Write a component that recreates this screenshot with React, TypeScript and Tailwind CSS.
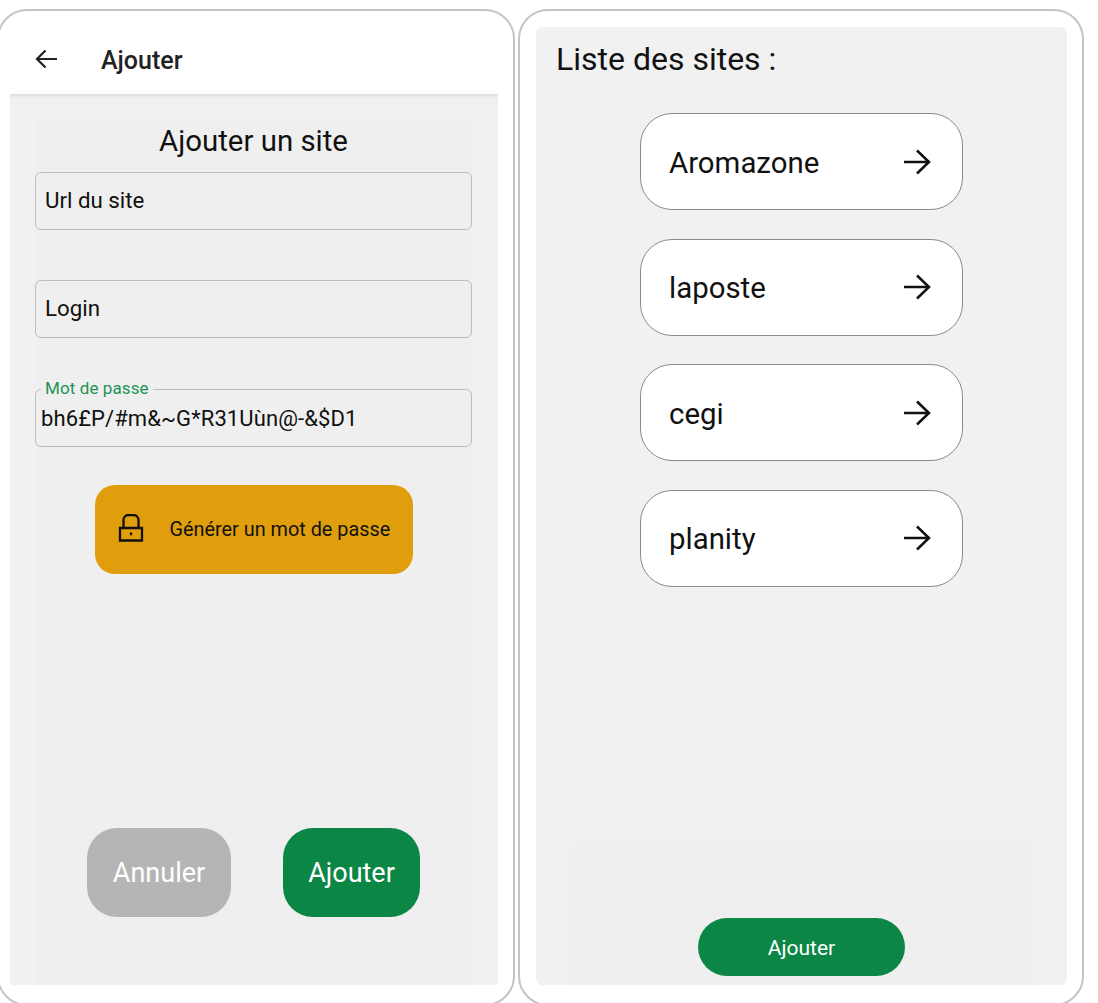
const font = { fontFamily: "Roboto, sans-serif" }

const sites = ["Aromazone", "laposte", "cegi", "planity"]

function OutlinedField({ label, className = "" }: { label: string; className?: string }) {
  return (
    <div className={`flex h-[58px] w-[437px] items-center rounded-[6px] border-[1.5px] border-[#bdbdbd] pl-[9px] text-[22.3px] text-[#111] ${className}`}>
      {label}
    </div>
  )
}

function PasswordField() {
  return (
    <div className="relative mt-[51px] flex h-[58px] w-[437px] items-center rounded-[6px] border-[1.5px] border-[#bdbdbd] pl-[5px] text-[22px] tracking-[0.1px] text-[#111]">
      <span className="absolute -top-[12px] left-[5px] bg-[#efefef] px-[4px] text-[17px] leading-[20px] text-[#1c9455]">Mot de passe</span>
      <span className="pt-[1px]">bh6£P/#m&amp;~G*R31Uùn@-&amp;$D1</span>
    </div>
  )
}

function AddScreen() {
  return (
    <section className="-ml-[3px] flex h-[997px] w-[518px] shrink-0 flex-col rounded-[30px] border-2 border-[#c4c4c4] bg-white pl-[11px] pr-[15px]">
      <header className="flex h-[83px] shrink-0 items-center pl-[23px] pt-[17px]">
        <svg className="mb-[4px]" width="26" height="26" viewBox="0 0 26 26" fill="none" stroke="#222" strokeWidth="2.2">
          <path d="M24 13H4M12.5 4.5 4 13l8.5 8.5" />
        </svg>
        <h1 className="ml-[42px] text-[25px] font-medium text-[#222]">Ajouter</h1>
      </header>
      <div className="h-[891px] w-[488px] rounded-b-[4px] bg-[#f1f1f1] px-[25px] pt-[26px] shadow-[inset_0_5px_5px_-4px_rgba(0,0,0,0.12)]">
        <div className="flex h-[865px] w-[437px] flex-col items-center bg-[#efefef]">
          <h2 className="h-[52px] pt-[3px] text-[29.4px] leading-[36px] text-[#111]">Ajouter un site</h2>
          <OutlinedField label="Url du site" />
          <OutlinedField label="Login" className="mt-[50px]" />
          <PasswordField />
          <button className="mt-[38px] flex h-[89px] w-[318px] items-center rounded-[20px] bg-[#e09e0c] pl-[23px] text-[19.85px] text-[#111]">
            <svg className="mb-[4px]" width="26" height="28" viewBox="0 0 26 28" fill="none" stroke="#111" strokeWidth="2.3">
              <path d="M2 14h22v12.5H2zM5.5 14V6a5 5 0 0 1 5-5h5a5 5 0 0 1 5 5v8" />
              <circle cx="13" cy="19.5" r="1.2" fill="#111" stroke="none" />
              <path d="M13 19.5v2" strokeWidth="1.3" />
            </svg>
            <span className="ml-[26px] pt-[1px]">Générer un mot de passe</span>
          </button>
          <div className="mt-[254px] flex w-[333px] justify-between">
            <button className="h-[89px] w-[144px] rounded-[30px] bg-[#b5b5b5] pt-[2px] text-[27px] text-white">Annuler</button>
            <button className="h-[89px] w-[137px] rounded-[30px] bg-[#0b8645] pt-[2px] text-[27px] text-white">Ajouter</button>
          </div>
        </div>
      </div>
    </section>
  )
}

function SiteCard({ name }: { name: string }) {
  return (
    <div className="flex h-[97px] w-[323px] items-center justify-between rounded-[32px] border border-[#8a8a8a] bg-white pl-[28px] pr-[29px] text-[29.4px] text-[#111]">
      <span className="pt-[3px]">{name}</span>
      <svg className="mr-[1px]" width="32" height="28" viewBox="0 0 32 28" fill="none" stroke="#111" strokeWidth="2.5">
        <path d="M4 14h25M17 2.5 29 14 17 25.5" />
      </svg>
    </div>
  )
}

function ListScreen() {
  return (
    <section className="ml-[3px] flex h-[997px] w-[566px] shrink-0 flex-col rounded-[30px] border-2 border-[#c4c4c4] bg-white pl-[16px] pr-[15px] pt-[16px]">
      <div className="flex h-[958px] w-[531px] flex-col rounded-[6px] bg-[#f1f1f1]">
        <h2 className="pl-[20px] pt-[12px] text-[32px] leading-[40px] text-[#111]">Liste des sites :</h2>
        <div className="mt-[34px] flex flex-col items-center gap-[28.5px]">
          {sites.map((site) => (
            <SiteCard key={site} name={site} />
          ))}
        </div>
        <div className="mt-auto ml-[34px] flex h-[143px] w-[463px] items-end justify-center bg-[#efefef] pb-[9px]">
          <button className="h-[58px] w-[207px] rounded-[29px] bg-[#0b8645] pt-[3px] text-[21px] text-white">Ajouter</button>
        </div>
      </div>
    </section>
  )
}

export default function App() {
  return (
    <div className="flex h-[1003px] w-[1098px] items-start overflow-hidden bg-white pt-[9px]" style={font}>
      <AddScreen />
      <ListScreen />
    </div>
  )
}
